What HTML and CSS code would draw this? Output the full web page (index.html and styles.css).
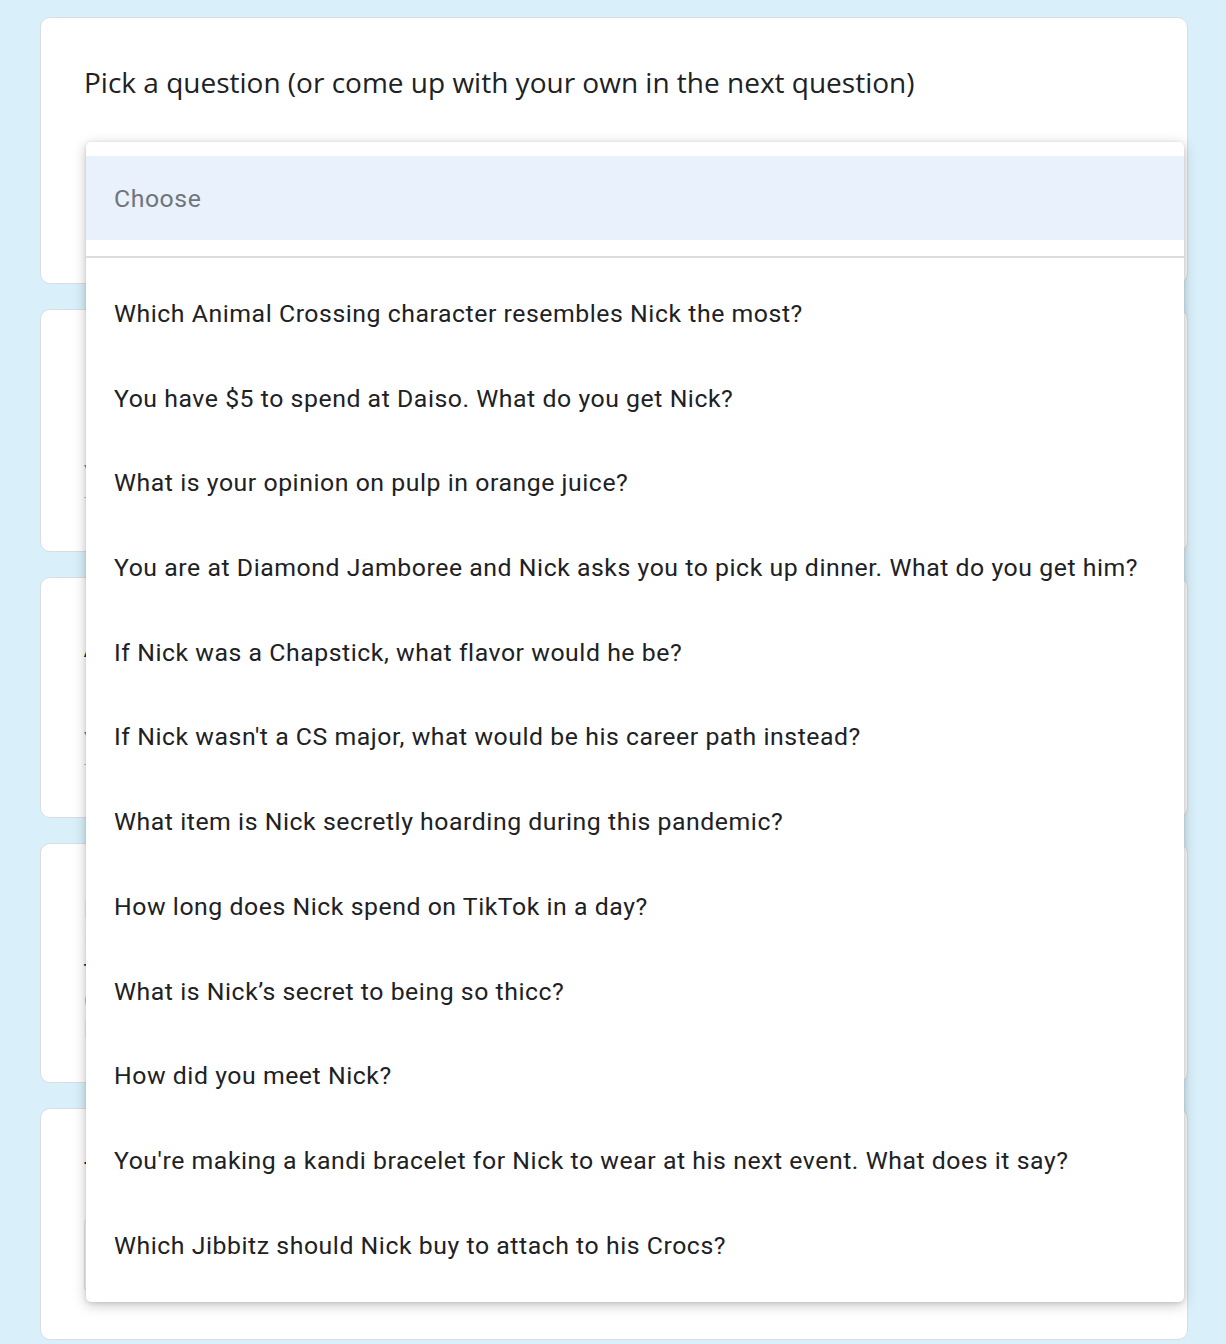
FILE: index.html
```html
<!DOCTYPE html>
<html lang="en">
<head>
<meta charset="utf-8">
<title>Pick a question</title>
<link rel="stylesheet" href="styles.css">
</head>
<body>
<div class="page">
  <div class="card card-1">
    <div class="q-title">Pick a question (or come up with your own in the next question)</div>
  </div>
  <div class="card card-2">
    <div class="q-title">Describe Nick in three words</div>
    <div class="answer">Your answer</div>
  </div>
  <div class="card card-3">
    <div class="q-title q-low">Answer the question you picked</div>
    <div class="answer">Your answer</div>
  </div>
  <div class="card card-4">
    <div class="q-multi">
      <div>Leave Nick a message for his birthday</div>
      <div>If you want to, tell him about a memory</div>
      <div>tell him what you appreciate about him</div>
      <div>(anything goes!)</div>
      <div>Let us know here.</div>
    </div>
  </div>
  <div class="card card-5">
    <div class="q-dash">-</div>
    <div class="box-stub"></div>
  </div>

  <div class="dropdown">
    <div class="opt opt-choose">Choose</div>
    <div class="divider"></div>
    <div class="opt">Which Animal Crossing character resembles Nick the most?</div>
    <div class="opt">You have $5 to spend at Daiso. What do you get Nick?</div>
    <div class="opt">What is your opinion on pulp in orange juice?</div>
    <div class="opt">You are at Diamond Jamboree and Nick asks you to pick up dinner. What do you get him?</div>
    <div class="opt">If Nick was a Chapstick, what flavor would he be?</div>
    <div class="opt">If Nick wasn't a CS major, what would be his career path instead?</div>
    <div class="opt">What item is Nick secretly hoarding during this pandemic?</div>
    <div class="opt">How long does Nick spend on TikTok in a day?</div>
    <div class="opt">What is Nick’s secret to being so thicc?</div>
    <div class="opt">How did you meet Nick?</div>
    <div class="opt">You're making a kandi bracelet for Nick to wear at his next event. What does it say?</div>
    <div class="opt">Which Jibbitz should Nick buy to attach to his Crocs?</div>
  </div>
</div>
</body>
</html>
```

FILE: styles.css
```css
html, body {
  margin: 0;
  padding: 0;
  background: #d9f0fa;
  height: 1344px;
  overflow: hidden;
}

.page {
  position: relative;
  width: 1148px;
  margin-left: 40px;
  padding-top: 17px;
  display: flex;
  flex-direction: column;
  gap: 25px;
  font-family: Roboto, "Liberation Sans", sans-serif;
  color: #202124;
}

.card {
  box-sizing: border-box;
  background: #fff;
  border: 1px solid #dadce0;
  border-radius: 10px;
  padding: 46px 43px 24px;
}

.card-1 { height: 267px; }
.card-2 { height: 243px; padding-top: 41px; }
.card-3 { height: 241px; padding-top: 50px; }
.card-4 { height: 240px; padding-top: 50px; }
.card-5 { height: 232px; padding-top: 38px; }

.q-title {
  font-family: "Open Sans", Lato, sans-serif;
  font-size: 28px;
  line-height: 36px;
  letter-spacing: 0;
  color: #202124;
  white-space: nowrap;
}

.answer {
  margin-top: 72px;
  width: 540px;
  font-size: 24px;
  line-height: 30px;
  color: #70757a;
  padding-bottom: 8px;
  border-bottom: 1px solid #c4c7c9;
}

.card-3 .answer { margin-top: 62px; }

.q-multi {
  font-size: 26px;
  line-height: 30px;
  color: #202124;
}

.q-dash {
  font-size: 26px;
  line-height: 30px;
}

.box-stub {
  margin-top: 42px;
  width: 400px;
  height: 70px;
  border: 1px solid #e4e6e8;
  border-radius: 4px;
}

.dropdown {
  position: absolute;
  left: 46px;
  top: 142px;
  width: 1098px;
  box-sizing: border-box;
  padding: 14px 0;
  background: #fff;
  border-radius: 5px;
  box-shadow: 0 3px 14px rgba(0, 0, 0, 0.22), 0 1px 4px rgba(0, 0, 0, 0.12);
  font-family: Roboto, "Liberation Sans", sans-serif;
}

.opt {
  display: flex;
  align-items: center;
  height: 84.73px;
  padding-left: 28px;
  font-size: 24.8px;
  letter-spacing: 0.55px;
  color: #202124;
  white-space: nowrap;
}

.opt-choose {
  height: 84px;
  background: #e9f1fd;
  color: #70757a;
}

.divider {
  height: 2px;
  background: #dadce0;
  margin: 16px 0 13px;
}
```
